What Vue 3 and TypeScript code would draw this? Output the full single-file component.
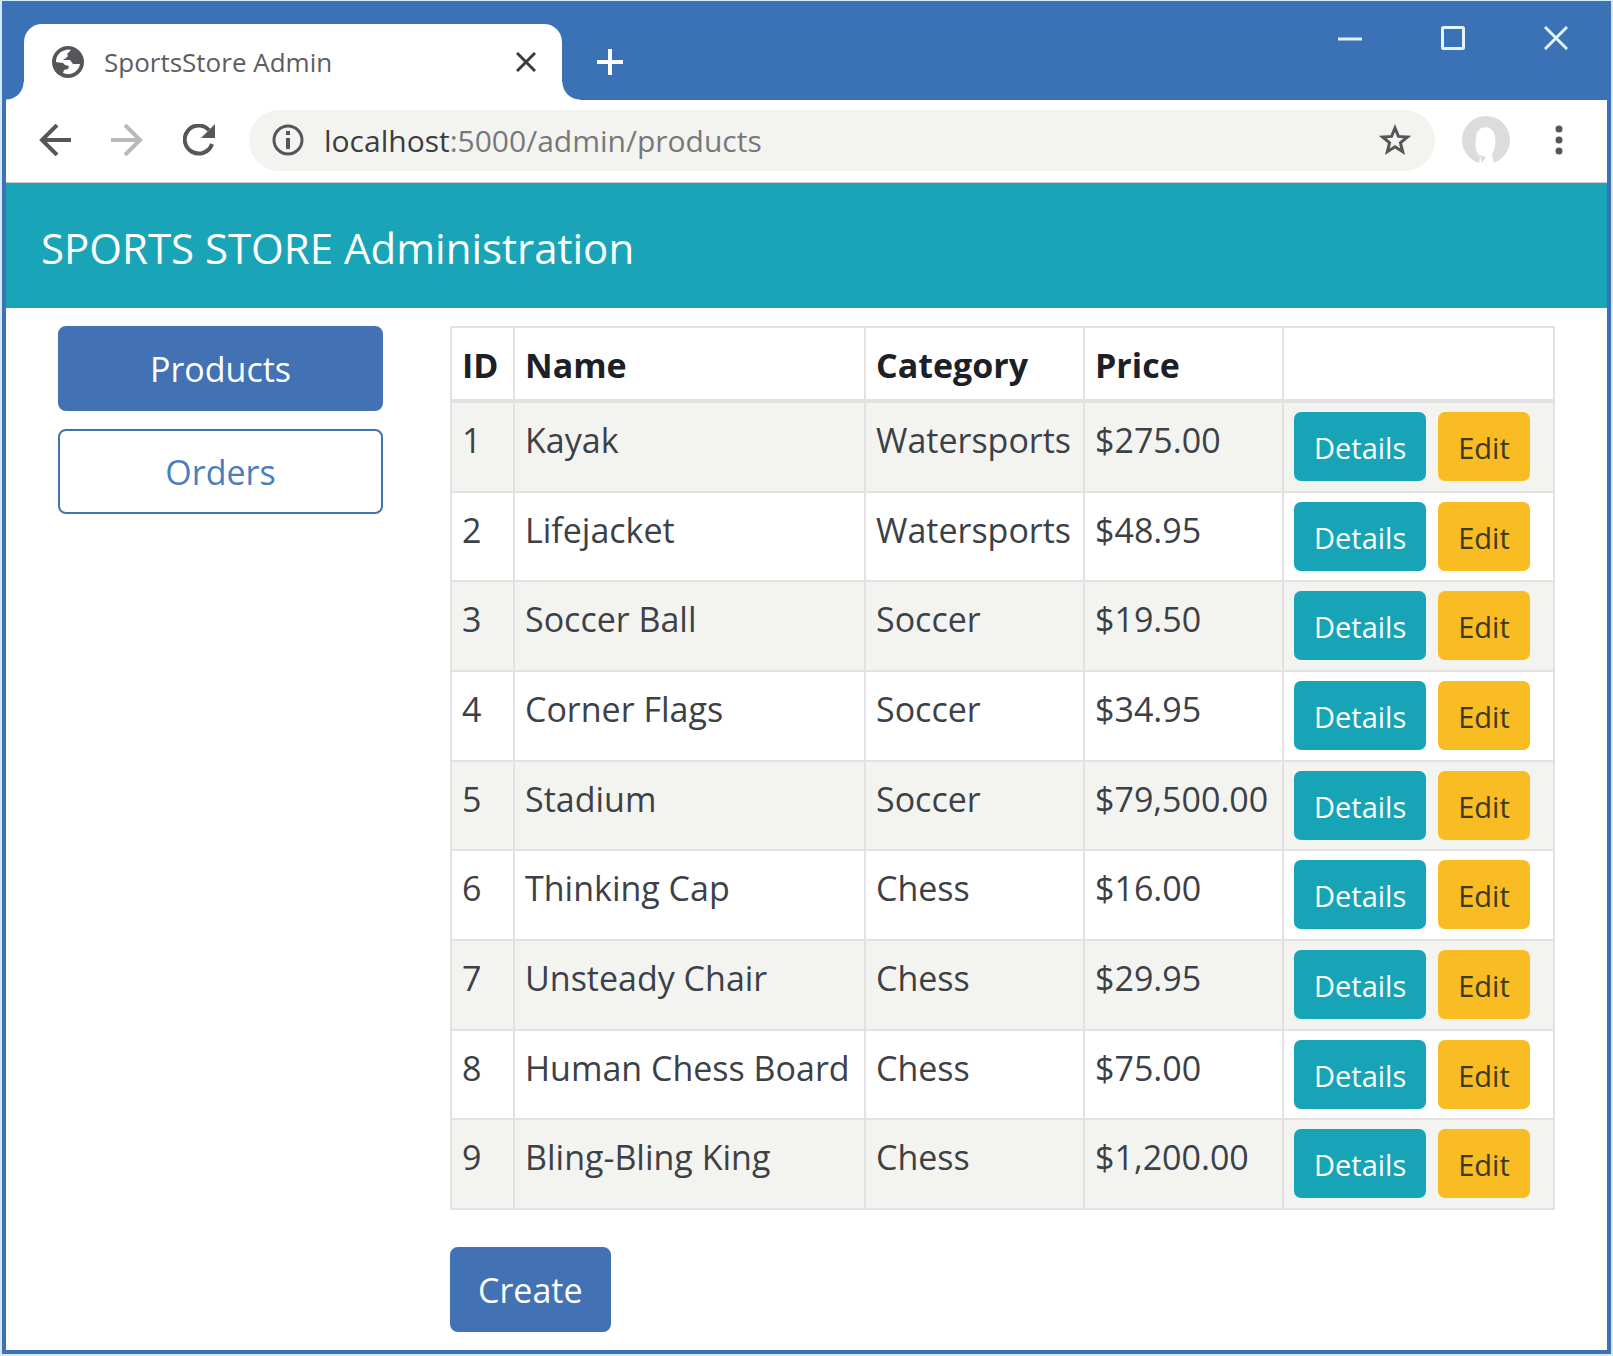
<script setup lang="ts">
interface Product {
  id: number
  name: string
  category: string
  price: string
}

const products: Product[] = [
  { id: 1, name: 'Kayak', category: 'Watersports', price: '$275.00' },
  { id: 2, name: 'Lifejacket', category: 'Watersports', price: '$48.95' },
  { id: 3, name: 'Soccer Ball', category: 'Soccer', price: '$19.50' },
  { id: 4, name: 'Corner Flags', category: 'Soccer', price: '$34.95' },
  { id: 5, name: 'Stadium', category: 'Soccer', price: '$79,500.00' },
  { id: 6, name: 'Thinking Cap', category: 'Chess', price: '$16.00' },
  { id: 7, name: 'Unsteady Chair', category: 'Chess', price: '$29.95' },
  { id: 8, name: 'Human Chess Board', category: 'Chess', price: '$75.00' },
  { id: 9, name: 'Bling-Bling King', category: 'Chess', price: '$1,200.00' },
]
</script>

<template>
  <div class="window">
    <header class="titlebar">
      <div class="tab">
        <svg class="globe" viewBox="0 0 32 32" aria-hidden="true">
          <circle cx="16" cy="16" r="16" fill="#55565a" />
          <path d="M19 4l-4 4 1 2-2 2-3 2h7l3 4h7A12 12 0 0 1 11 27l1-3 4-1 1-3-4-1-2-2-7-1A12 12 0 0 1 19 4z" fill="#fff" />
        </svg>
        <span class="tab-title">SportsStore Admin</span>
        <button class="icon-button" aria-label="Close tab">
          <svg class="tab-close" viewBox="0 0 20 20"><path d="M1 1l18 18M19 1L1 19" fill="none" stroke="#3c3c3e" stroke-width="3" /></svg>
        </button>
      </div>
      <button class="icon-button new-tab" aria-label="New tab">
        <svg width="28" height="28" viewBox="0 0 28 28"><path d="M14 1v26M1 14h26" fill="none" stroke="#fff" stroke-width="4" /></svg>
      </button>
      <div class="window-controls">
        <button class="icon-button" aria-label="Minimize">
          <svg width="24" height="24" viewBox="0 0 24 24"><path d="M0 13h24" fill="none" stroke="#e4f3ff" stroke-width="3" /></svg>
        </button>
        <button class="icon-button" aria-label="Maximize">
          <svg width="24" height="24" viewBox="0 0 24 24"><rect x="1.500" y="1.500" width="21" height="21" rx="1" fill="none" stroke="#e4f3ff" stroke-width="3" /></svg>
        </button>
        <button class="icon-button" aria-label="Close window">
          <svg width="24" height="24" viewBox="0 0 24 24"><path d="M1 1l22 22M23 1L1 23" fill="none" stroke="#e4f3ff" stroke-width="3" /></svg>
        </button>
      </div>
    </header>

    <nav class="toolbar" aria-label="Browser">
      <button class="icon-button" aria-label="Back">
        <svg width="32" height="32" viewBox="0 0 32 32"><path d="M32 16H3M18 1L3 16l15 15" fill="none" stroke="#55565a" stroke-width="4" /></svg>
      </button>
      <button class="icon-button" aria-label="Forward">
        <svg width="32" height="32" viewBox="0 0 32 32"><path d="M0 16h29M14 1l15 15-15 15" fill="none" stroke="#b9b9bc" stroke-width="4" /></svg>
      </button>
      <button class="icon-button" aria-label="Reload">
        <svg width="32" height="32" viewBox="0 0 32 32">
          <path d="M29 20A14 14 0 1 1 26 6" fill="none" stroke="#55565a" stroke-width="4" />
          <path d="M32 0v14H18z" fill="#55565a" />
        </svg>
      </button>
      <div class="address">
        <svg class="info" width="32" height="32" viewBox="0 0 32 32" aria-hidden="true">
          <circle cx="16" cy="16" r="14" fill="none" stroke="#55565a" stroke-width="3" />
          <path d="M14 7h4v4h-4zM14 14h4v11h-4z" fill="#55565a" />
        </svg>
        <label class="host" for="path">localhost</label>
        <input id="path" class="path" type="text" value=":5000/admin/products" />
        <button class="icon-button" aria-label="Bookmark this page">
          <svg width="32" height="32" viewBox="0 0 32 32"><path d="M16 4l3.400 8.400 9 .6-7 5.800 2.300 8.900L16 22.800l-7.700 4.900 2.300-8.900-7-5.800 9-.6z" fill="none" stroke="#55565a" stroke-width="3" /></svg>
        </button>
      </div>
      <button class="icon-button" aria-label="Profile">
        <svg width="50" height="50" viewBox="0 0 50 50">
          <circle cx="25" cy="25" r="24" fill="#dcdcdc" />
          <path d="M18 50l1-9c-5-4-5-12-4-19 1-13 18-13 19 0 1 7 0 12-3 17l2 11z" fill="#fff" />
          <path d="M19 40l6 2-4 6z" fill="#dcdcdc" />
        </svg>
      </button>
      <button class="icon-button menu" aria-label="Menu">
        <svg width="8" height="32" viewBox="0 0 8 32" fill="#55565a"><circle cx="4" cy="5" r="3.500" /><circle cx="4" cy="16" r="3.500" /><circle cx="4" cy="27" r="3.500" /></svg>
      </button>
    </nav>

    <h1 class="banner">SPORTS STORE Administration</h1>

    <div class="content">
      <nav class="sidebar" aria-label="Administration">
        <a class="btn primary" href="#products">Products</a>
        <a class="btn outline" href="#orders">Orders</a>
      </nav>
      <main>
        <table>
          <colgroup>
            <col class="col-id" />
            <col />
            <col class="col-category" />
            <col class="col-price" />
            <col class="col-actions" />
          </colgroup>
          <thead>
            <tr>
              <th scope="col">ID</th>
              <th scope="col">Name</th>
              <th scope="col">Category</th>
              <th scope="col">Price</th>
              <td></td>
            </tr>
          </thead>
          <tbody>
            <tr v-for="p in products" :key="p.id">
              <td>{{ p.id }}</td>
              <td>{{ p.name }}</td>
              <td>{{ p.category }}</td>
              <td>{{ p.price }}</td>
              <td class="actions-cell">
                <div class="actions">
                  <button class="btn-sm info-btn">Details</button>
                  <button class="btn-sm warn-btn">Edit</button>
                </div>
              </td>
            </tr>
          </tbody>
        </table>
        <button class="btn primary create">Create</button>
      </main>
    </div>
  </div>
</template>

<style>
body {
  margin: 0;
  background: #d3eafa;
}
</style>

<style scoped>
* {
  box-sizing: border-box;
}

.window {
  display: flex;
  flex-direction: column;
  min-height: 100vh;
  border: 2px solid #d3eafa;
  border-top-width: 1px;
  font-family: "Open Sans", "Noto Sans", sans-serif;
  font-size: 34px;
  line-height: 53px;
  color: #3c4047;
  background: #fff;
  box-shadow: inset 0 0 0 4px #3f72b4;
  padding: 1px 4px 4px;
}

button,
input {
  font: inherit;
}

.icon-button {
  display: flex;
  padding: 0;
  border: 0;
  background: none;
  cursor: pointer;
}

svg {
  display: block;
  flex: none;
}

.titlebar {
  display: flex;
  align-items: stretch;
  height: 98px;
  padding: 22px 39px 0 18px;
  background: #3b72b5;
}

.tab {
  position: relative;
  display: flex;
  align-items: center;
  width: 538px;
  padding: 0 26px 0 28px;
  border-radius: 18px 18px 0 0;
  background: #fff;
}

.tab::before,
.tab::after {
  content: "";
  position: absolute;
  bottom: 0;
  width: 18px;
  height: 18px;
}

.tab::before {
  right: 100%;
  background: radial-gradient(circle at 0 0, #3b72b5 17px, #fff 18px);
}

.tab::after {
  left: 100%;
  background: radial-gradient(circle at 100% 0, #3b72b5 17px, #fff 18px);
}

.globe {
  width: 32px;
  height: 32px;
}

.tab-title {
  flex: 1;
  margin-left: 20px;
  font-size: 26px;
  color: #5c5d62;
}

.tab-close {
  width: 20px;
  height: 20px;
}

.new-tab {
  align-items: center;
  margin-left: 34px;
}

.window-controls {
  display: flex;
  align-items: flex-start;
  gap: 79px;
  margin-left: auto;
  padding-top: 2px;
}

.toolbar {
  display: flex;
  align-items: center;
  height: 83px;
  padding: 0 44px 2px 33px;
  gap: 40px;
  border-bottom: 1px solid #c9c9cc;
}

.address {
  display: flex;
  flex: 1;
  align-items: center;
  height: 61px;
  margin-right: -14px;
  margin-left: -6px;
  padding: 0 24px 0 23px;
  border-radius: 31px;
  background: #f3f4f0;
  font-size: 30px;
}

.host {
  margin-left: 20px;
  color: #3c3d42;
}

.path {
  flex: 1;
  min-width: 0;
  padding: 0;
  border: 0;
  outline: 0;
  background: none;
  color: #77787c;
}

.menu {
  margin-left: 4px;
}

.banner {
  margin: 0;
  padding: 38px 35px 34px;
  background: #19a5b7;
  color: #fff;
  font-size: 42px;
  font-weight: 400;
}

.content {
  display: grid;
  grid-template-columns: minmax(0, 5fr) minmax(0, 17fr);
  gap: 67px;
  padding: 18px 52px 16px;
}

.sidebar {
  display: flex;
  flex-direction: column;
  gap: 18px;
}

.btn {
  padding: 15px 26px 13px;
  border: 2px solid #4272b4;
  border-radius: 8px;
  text-align: center;
  text-decoration: none;
  cursor: pointer;
}

.primary {
  background: #4272b4;
  color: #fff;
}

.outline {
  background: #fff;
  color: #4a7dbd;
}

table {
  width: 100%;
  height: 884px;
  table-layout: fixed;
  border-collapse: collapse;
}

.col-id {
  width: 63px;
}

.col-category {
  width: 219px;
}

.col-price {
  width: 199px;
}

.col-actions {
  width: 271px;
}

th,
td {
  padding: 11px 10px 7px;
  border: 2px solid #e3e1e3;
  text-align: left;
  vertical-align: top;
  white-space: nowrap;
}

th {
  color: #1d2026;
  font-weight: 700;
}

thead th,
thead td {
  border-bottom-width: 4px;
}

tbody tr:nth-child(odd) {
  background: #f3f4f0;
}

.actions-cell {
  padding-top: 9px;
}

.actions {
  display: flex;
  gap: 12px;
}

.btn-sm {
  padding: 9px 20px 7px;
  border: 0;
  border-radius: 7px;
  font-size: 29px;
  cursor: pointer;
}

.info-btn {
  background: #17a4b6;
  color: #fff;
}

.warn-btn {
  background: #f9bc22;
  color: #3b3a26;
}

.create {
  display: block;
  margin-top: 37px;
}
</style>
